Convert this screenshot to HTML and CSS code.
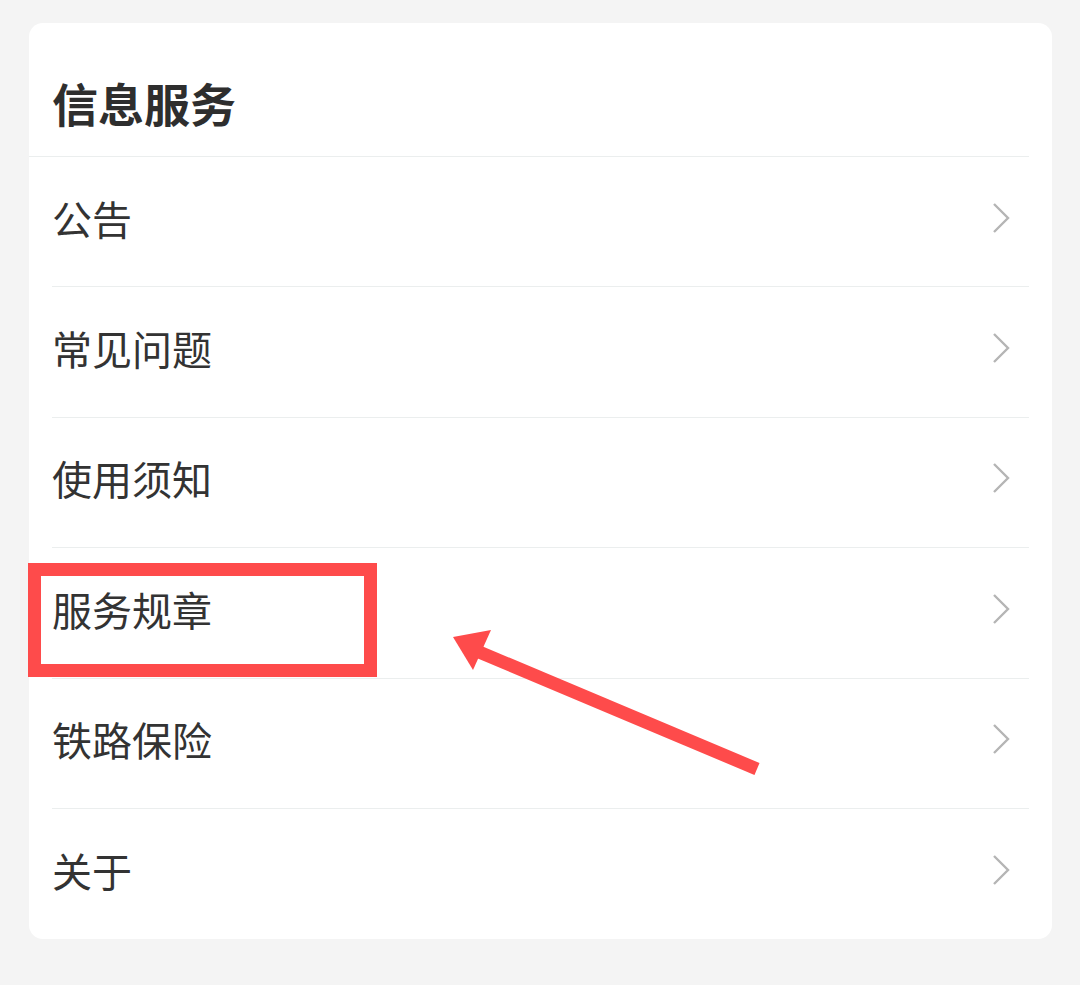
FILE: index.html
```html
<!DOCTYPE html>
<html lang="zh-CN">
<head>
    <meta charset="UTF-8">
    <meta name="viewport" content="width=device-width, initial-scale=1.0">
    <title>信息服务</title>
    <link rel="stylesheet" href="styles.css">
</head>
<body>
    <div class="card">
        <h1 class="card-title">信息服务</h1>
        <ul class="menu">
            <li><span>公告</span><svg class="chevron" viewBox="0 0 20 32"><polyline points="3,2 17,16 3,30"/></svg></li>
            <li><span>常见问题</span><svg class="chevron" viewBox="0 0 20 32"><polyline points="3,2 17,16 3,30"/></svg></li>
            <li><span>使用须知</span><svg class="chevron" viewBox="0 0 20 32"><polyline points="3,2 17,16 3,30"/></svg></li>
            <li><span>服务规章</span><svg class="chevron" viewBox="0 0 20 32"><polyline points="3,2 17,16 3,30"/></svg></li>
            <li><span>铁路保险</span><svg class="chevron" viewBox="0 0 20 32"><polyline points="3,2 17,16 3,30"/></svg></li>
            <li><span>关于</span><svg class="chevron" viewBox="0 0 20 32"><polyline points="3,2 17,16 3,30"/></svg></li>
        </ul>
    </div>

    <!-- annotation drawn over the screenshot -->
    <div class="highlight-box"></div>
    <svg class="arrow" viewBox="0 0 1080 985">
        <line x1="472" y1="649" x2="757" y2="769"/>
        <polygon points="453,637 491,630 473,670"/>
    </svg>
</body>
</html>
```

FILE: styles.css
```css
body {
    margin: 0;
    padding: 23px 28px 0 29px;
    background-color: #f4f4f4;
    font-family: "Noto Sans CJK SC", "Noto Sans", sans-serif;
    color: #333333;
    height: 985px;
    box-sizing: border-box;
    position: relative;
    overflow: hidden;
}
.card {
    background: #ffffff;
    border-radius: 14px;
    overflow: hidden;
}
.card-title {
    margin: 0 23px 0 0;
    padding: 56px 0 31px 23px;
    height: 46px;
    line-height: 46px;
    font-size: 46px;
    font-weight: 700;
    color: #2e2e2e;
    border-bottom: 1px solid #ebeeee;
}
.menu {
    list-style-type: none;
    margin: 0 23px;
    padding: 0;
}
.menu li {
    height: 130.4px;
    box-sizing: border-box;
    display: flex;
    justify-content: space-between;
    align-items: center;
    padding: 0 18px 8px 0;
    border-bottom: 1px solid #ebeeee;
    font-size: 40px;
    line-height: 40px;
}
.menu li:last-child {
    border-bottom: none;
}
.chevron {
    width: 20px;
    height: 32px;
    fill: none;
    stroke: #b5b5b5;
    stroke-width: 2.4;
}
.highlight-box {
    position: absolute;
    left: 28px;
    top: 563px;
    width: 349px;
    height: 114px;
    box-sizing: border-box;
    border: 13px solid #fe4b4b;
}
.arrow {
    position: absolute;
    left: 0;
    top: 0;
    width: 1080px;
    height: 985px;
    pointer-events: none;
}
.arrow line {
    stroke: #fe4b4b;
    stroke-width: 13;
}
.arrow polygon {
    fill: #fe4b4b;
}
```
